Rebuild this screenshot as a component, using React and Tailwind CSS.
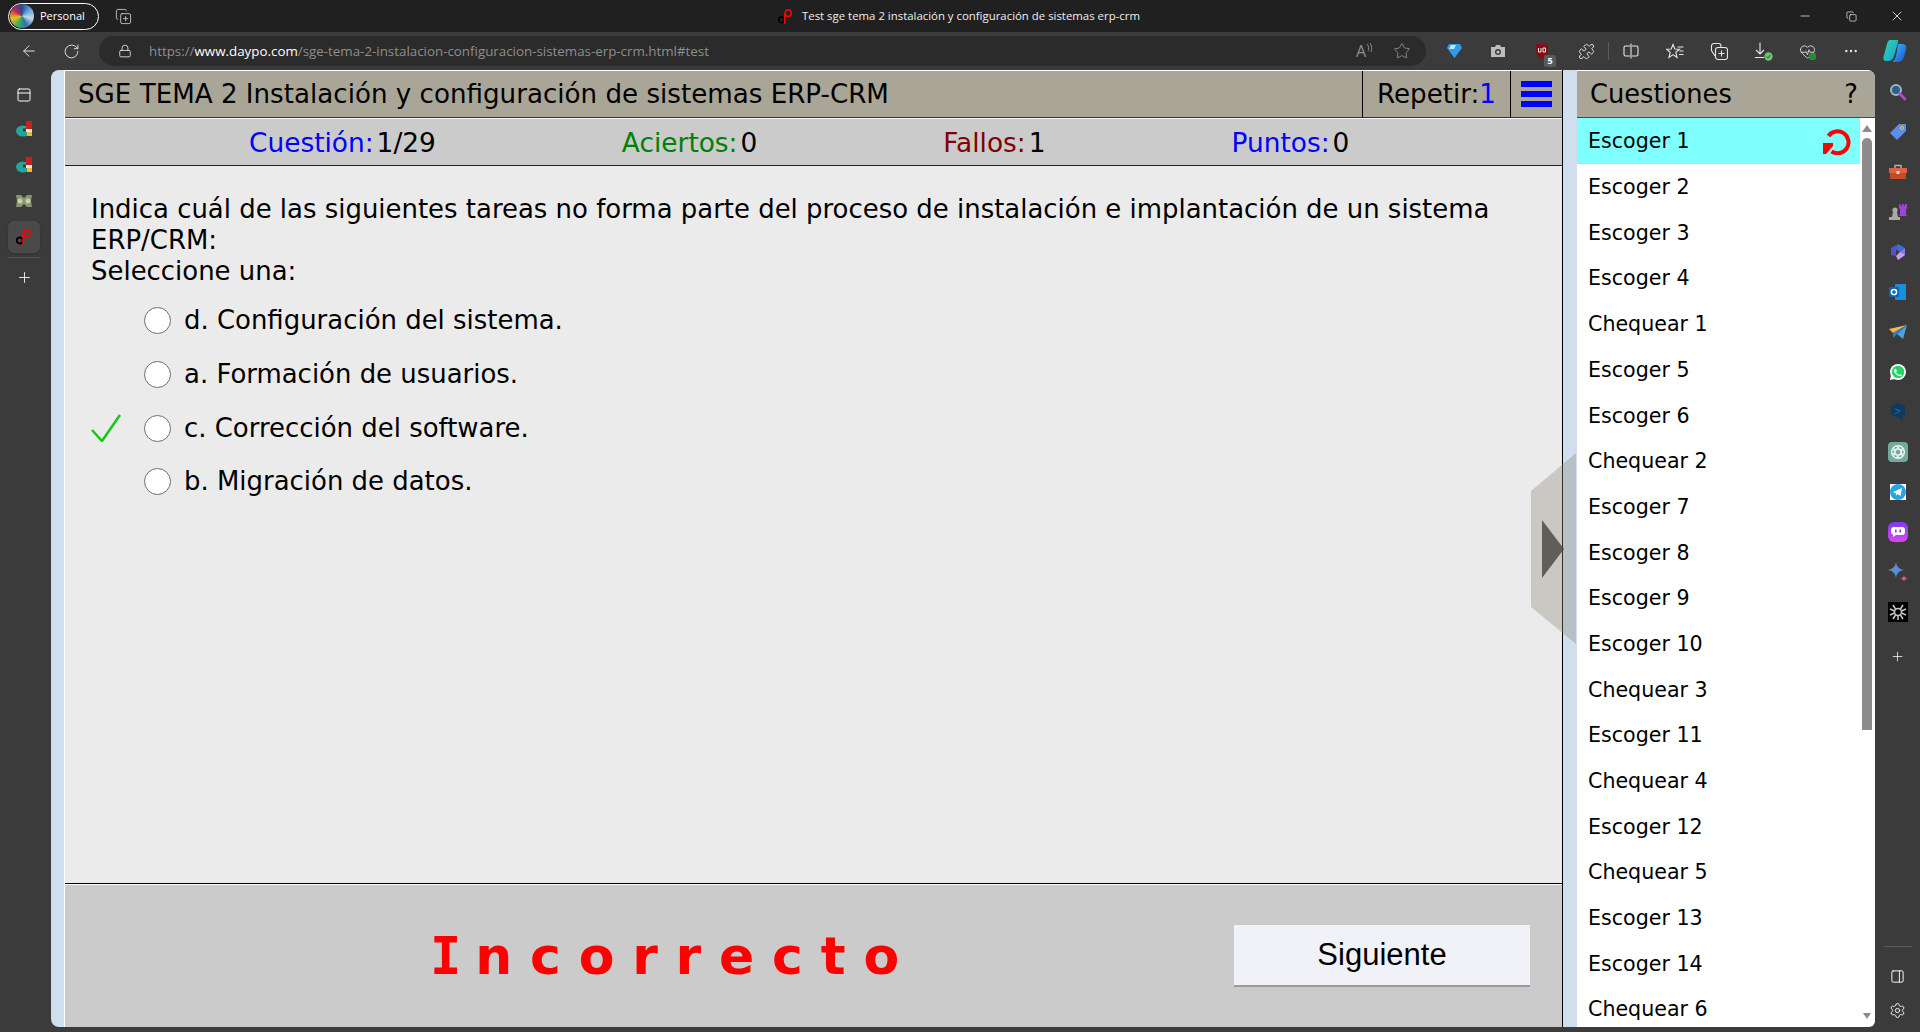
import React from 'react';
import {
  ArrowLeft, RotateCw, Lock, Star, Puzzle, HeartPulse, MoreHorizontal,
  Minus, X, Copy, Plus, Settings, PanelRight, PanelTop, CopyPlus,
} from 'lucide-react';

const QUESTIONS = [
  'Escoger 1', 'Escoger 2', 'Escoger 3', 'Escoger 4', 'Chequear 1', 'Escoger 5', 'Escoger 6', 'Chequear 2',
  'Escoger 7', 'Escoger 8', 'Escoger 9', 'Escoger 10', 'Chequear 3', 'Escoger 11', 'Chequear 4', 'Escoger 12',
  'Chequear 5', 'Escoger 13', 'Escoger 14', 'Chequear 6',
];

const OPTIONS = [
  { label: 'd. Configuración del sistema.' },
  { label: 'a. Formación de usuarios.' },
  { label: 'c. Corrección del software.', correct: true },
  { label: 'b. Migración de datos.' },
];

const STATS = [
  { label: 'Cuestión:', value: '1/29', color: 'text-[#0000ff]' },
  { label: 'Aciertos:', value: '0', color: 'text-[#008000]' },
  { label: 'Fallos:', value: '1', color: 'text-[#800000]' },
  { label: 'Puntos:', value: '0', color: 'text-[#0000ff]' },
];

function Favicon({ size = 16 }) {
  return (
    <svg width={size} height={size} viewBox="0 0 16 16" fill="none">
      <circle cx="3.800" cy="11.500" r="3" stroke="#000" strokeWidth="1.800" />
      <ellipse cx="10.800" cy="4.500" rx="3.200" ry="3.500" stroke="#f00" strokeWidth="1.800" />
      <path d="M7.200 16 V5" stroke="#f00" strokeWidth="1.800" />
    </svg>
  );
}

function PieTab() {
  return (
    <svg width="16" height="16" viewBox="0 0 16 16">
      <ellipse cx="7" cy="10" rx="7" ry="5.500" fill="#26a69a" />
      <rect x="7" y="7.500" width="4" height="3" fill="#3b3b3b" />
      <rect x="10" y="0" width="6" height="8" fill="#c62020" />
      <rect x="10" y="8" width="6" height="3" fill="#e9e9e9" />
      <rect x="11" y="11" width="5" height="4" fill="#f4b82e" />
    </svg>
  );
}

function MaskTab() {
  return (
    <svg width="16" height="14" viewBox="0 0 16 14">
      <path d="M0 1 L5 1 L8 4 L11 1 L16 1 L15 7 L16 13 L11 13 L8 10 L5 13 L0 13 L1 7 Z" fill="#8c9478" />
      <circle cx="4" cy="7" r="2.500" fill="#c6d690" />
      <circle cx="12" cy="7" r="2.500" fill="#c6d690" />
    </svg>
  );
}

function LeftRail() {
  return (
    <div className="w-[51px] shrink-0 flex flex-col items-center pr-[3px]">
      <div className="h-[41px] pt-[17px]"><PanelTop size={16} strokeWidth={1.5} className="text-white" /></div>
      <div className="h-9 flex items-center"><PieTab /></div>
      <div className="h-9 flex items-center"><PieTab /></div>
      <div className="h-9 flex items-center"><MaskTab /></div>
      <div className="w-8 h-8 mt-[2px] rounded-md bg-[#4a4a4a] shadow flex items-center justify-center"><Favicon /></div>
      <div className="w-8 h-px bg-[#555] mt-1" />
      <Plus size={17} strokeWidth={1.2} className="text-white mt-[11px]" />
    </div>
  );
}

function RightIcon({ children }) {
  return <div className="h-10 flex items-center justify-center">{children}</div>;
}

function RightRail() {
  return (
    <div className="w-[45px] shrink-0 flex flex-col pt-[2px]">
      <RightIcon>
        <svg width="18" height="18" viewBox="0 0 18 18" fill="none">
          <circle cx="7" cy="7" r="5" fill="#2c5f86" stroke="#9fb4c4" strokeWidth="2" />
          <path d="M11 11 L16 16" stroke="#c040e0" strokeWidth="2.600" strokeLinecap="round" />
        </svg>
      </RightIcon>
      <RightIcon>
        <svg width="18" height="18" viewBox="0 0 18 18">
          <path d="M10 1 H17 V8 L8 17 L1 10 Z" fill="#5b8def" />
          <circle cx="13" cy="5" r="1.600" fill="none" stroke="#f2c438" />
        </svg>
      </RightIcon>
      <RightIcon>
        <svg width="18" height="16" viewBox="0 0 18 16">
          <path d="M6 4 V1.500 H12 V4" fill="none" stroke="#b0b0b0" strokeWidth="1.400" />
          <rect x="0" y="4" width="18" height="5" fill="#e0613a" />
          <rect x="1" y="9" width="16" height="6" fill="#c44a28" />
          <rect x="7.500" y="7" width="3" height="3" fill="#ddd" />
        </svg>
      </RightIcon>
      <RightIcon>
        <svg width="18" height="18" viewBox="0 0 18 18">
          <circle cx="6" cy="7" r="2.600" fill="#a8a8a8" />
          <path d="M4 9 H8 L9 14 H11 V17 H0 V14 H3 Z" fill="#a8a8a8" />
          <path d="M10 1 H11.500 V2.500 H13 V1 H15 V2.500 H16 V1 H18 V5 L17 6 V11 L18 13 H10 L11 11 V6 L10 5 Z" fill="#a040e0" />
        </svg>
      </RightIcon>
      <RightIcon>
        <svg width="18" height="18" viewBox="0 0 18 18">
          <path d="M9 1 L16 5 L11 9 L7 6 Z" fill="#3a6fd8" />
          <path d="M16 5 V12 L9 17 L11 9 Z" fill="#9c6fe0" />
          <path d="M2 5 L9 1 L7 6 V13 L2 12 Z" fill="#5b4fd0" />
          <path d="M7 13 L11 9 L16 12 L9 17 Z" fill="#c2a0ec" />
        </svg>
      </RightIcon>
      <RightIcon>
        <svg width="18" height="18" viewBox="0 0 18 18">
          <rect x="6" y="1" width="11" height="16" rx="1" fill="#1490df" />
          <rect x="0" y="4" width="10" height="10" rx="1" fill="#0a64b8" />
          <circle cx="5" cy="9" r="2.600" fill="none" stroke="#fff" strokeWidth="1.500" />
        </svg>
      </RightIcon>
      <RightIcon>
        <svg width="18" height="15" viewBox="0 0 18 15">
          <path d="M0 4 L18 0 L4 8 Z" fill="#f4b84a" />
          <path d="M18 0 L14 14 L8 9 Z" fill="#4aa3df" />
          <path d="M18 0 L4 8 L4 13 L8 9 Z" fill="#2d7fc0" />
        </svg>
      </RightIcon>
      <RightIcon>
        <svg width="18" height="18" viewBox="0 0 18 18">
          <circle cx="9" cy="9" r="8" fill="#fff" />
          <path d="M1 17 L2 12 L6 16 Z" fill="#fff" />
          <circle cx="9" cy="9" r="6.200" fill="#25d366" />
          <path d="M6.500 5.500 L8 8 L7 9 C8 11 9 11.500 10.500 12 L11.500 11 L13 12.500 C11 14.500 5 11.500 5 7 Z" fill="#fff" />
        </svg>
      </RightIcon>
      <RightIcon>
        <svg width="16" height="20" viewBox="0 0 16 20">
          <path d="M8 1 L15 4 V13 L13 15 V19 L9 16 L1 13 V4 Z" fill="#0f3a5e" />
          <path d="M5 7 L10 9 L5 12" fill="none" stroke="#1d5a8a" strokeWidth="1.400" />
        </svg>
      </RightIcon>
      <RightIcon>
        <div className="w-5 h-5 rounded-[4px] bg-[#74aa9c] flex items-center justify-center">
          <svg width="16" height="16" viewBox="0 0 16 16" fill="none" stroke="#e8f3f0" strokeWidth="1.100">
            <circle cx="8" cy="8" r="6.500" />
            <ellipse cx="8" cy="8" rx="6.500" ry="2.800" />
            <ellipse cx="8" cy="8" rx="6.500" ry="2.800" transform="rotate(60 8 8)" />
            <ellipse cx="8" cy="8" rx="6.500" ry="2.800" transform="rotate(120 8 8)" />
          </svg>
        </div>
      </RightIcon>
      <RightIcon>
        <div className="w-4 h-4 bg-white flex items-center justify-center">
          <svg width="16" height="16" viewBox="0 0 16 16">
            <circle cx="8" cy="8" r="8" fill="#26a5e4" />
            <path d="M3 8 L12 4 L10.500 12 L7.500 10 L6 11.500 L6 9.500 Z" fill="#fff" />
          </svg>
        </div>
      </RightIcon>
      <RightIcon>
        <div className="w-5 h-5 rounded-[6px] bg-gradient-to-b from-[#7c3aed] to-[#d946ef] flex items-center justify-center">
          <svg width="14" height="12" viewBox="0 0 14 12">
            <path d="M3 1 H11 A3 3 0 0 1 14 4 V6 A3 3 0 0 1 11 9 H5 L2 11 V8.500 A3 3 0 0 1 0 6 V4 A3 3 0 0 1 3 1 Z" fill="#fff" />
            <rect x="4" y="3.500" width="1.600" height="3" fill="#a03ae0" />
            <rect x="8.400" y="3.500" width="1.600" height="3" fill="#a03ae0" />
          </svg>
        </div>
      </RightIcon>
      <RightIcon>
        <svg width="20" height="20" viewBox="0 0 20 20">
          <defs>
            <linearGradient id="gem" x1="0" y1="0" x2="1" y2="1">
              <stop offset="0" stopColor="#e8734a" />
              <stop offset="0.500" stopColor="#4a90e2" />
              <stop offset="1" stopColor="#9b6fe0" />
            </linearGradient>
          </defs>
          <path d="M8 0 C8.500 4 10.500 7 16 8 C10.500 9 8.500 12 8 16 C7.500 12 5.500 9 0 8 C5.500 7 7.500 4 8 0 Z" fill="url(#gem)" />
          <path d="M16 13 C16.200 15 17 16 20 16.500 C17 17 16.200 18 16 20 C15.800 18 15 17 12 16.500 C15 16 15.800 15 16 13 Z" fill="#d9607a" />
        </svg>
      </RightIcon>
      <RightIcon>
        <div className="w-5 h-5 bg-black flex items-center justify-center">
          <svg width="18" height="18" viewBox="0 0 18 18" fill="none" stroke="#c8c8c8" strokeWidth="1.500">
            <circle cx="9" cy="9" r="3.500" />
            <path d="M4 2 L6.500 6 M14 2 L11.500 6 M1 6 L5.500 8 M17 6 L12.500 8 M1 12 L5.500 10 M17 12 L12.500 10 M4 16 L6.500 12 M14 16 L11.500 12 M9 12.500 V17" />
          </svg>
        </div>
      </RightIcon>
      <div className="h-[48px] flex items-center justify-center"><Plus size={15} strokeWidth={1.2} className="text-white" /></div>
      <div className="flex-1" />
      <div className="w-7 h-px bg-[#5c5c5c] mx-auto mb-3" />
      <div className="h-[34px] flex items-center justify-center"><PanelRight size={15} strokeWidth={1.5} className="text-white" /></div>
      <div className="h-[34px] flex items-center justify-center mb-[5px]"><Settings size={17} strokeWidth={1.3} className="text-white" /></div>
    </div>
  );
}

function ToolCell({ children }) {
  return <div className="w-[44px] flex justify-center relative">{children}</div>;
}

function TopChrome() {
  return (
    <>
      <div className="h-8 bg-[#202020] flex items-center text-white shrink-0 relative">
        <div className="ml-2 h-[27px] w-[91px] rounded-full border border-white flex items-center gap-[6px] pl-[1px]">
          <div className="w-6 h-6 rounded-full bg-[conic-gradient(#274b8c,#5fa8d8,#c8d8e8,#2f6fb0,#3fae5a,#e8c020,#c02060,#274b8c)]" />
          <span className="text-[11px] font-['Open_Sans',sans-serif]">Personal</span>
        </div>
        <CopyPlus size={17} strokeWidth={1.1} className="ml-[16px] text-[#ddd]" />
        <div className="absolute left-[778px] top-0 h-8 flex items-center gap-[9px]">
          <Favicon size={15} />
          <span className="text-[11.4px] font-['Open_Sans',sans-serif] text-[#eee]">Test sge tema 2 instalación y configuración de sistemas erp-crm</span>
        </div>
        <div className="ml-auto flex items-center">
          <div className="w-[46px] flex justify-center"><Minus size={14} strokeWidth={1.2} /></div>
          <div className="w-[46px] flex justify-center"><Copy size={11} strokeWidth={1.4} /></div>
          <div className="w-[46px] flex justify-center"><X size={16} strokeWidth={1.2} /></div>
        </div>
      </div>
      <div className="h-[38px] bg-[#3b3b3b] flex items-center shrink-0 text-[#e6e6e6]">
        <div className="w-[57px] flex justify-center"><ArrowLeft size={18} strokeWidth={1.3} /></div>
        <div className="w-[32px] flex justify-center -ml-[2px]"><RotateCw size={17} strokeWidth={1.3} /></div>
        <div className="ml-[12px] w-[1327px] h-[30px] rounded-full bg-[#2b2b2b] flex items-center font-['Open_Sans',sans-serif] text-[13.35px]">
          <Lock size={14} strokeWidth={1.4} className="ml-[19px] mr-[17px] text-[#eee]" />
          <span className="text-[#8e8e8e]">https://</span>
          <span className="text-white">www.daypo.com</span>
          <span className="text-[#8e8e8e]">/sge-tema-2-instalacion-configuracion-sistemas-erp-crm.html#test</span>
          <div className="ml-auto flex items-center gap-[20px] pr-[15px] text-[#8e8e8e]">
            <div className="flex items-start">
              <span className="text-[16px] leading-none">A</span>
              <svg width="7" height="11" viewBox="0 0 7 11" fill="none" stroke="#8e8e8e"><path d="M1 1 C3 3 3 6 2 8 M4 0 C6 3 6 6 5 9" /></svg>
            </div>
            <Star size={18} strokeWidth={1.2} />
          </div>
        </div>
        <div className="flex items-center ml-[6px]">
          <ToolCell>
            <svg width="15" height="16" viewBox="0 0 15 16"><path d="M2 1 H13 L15 5 L7.500 15 L0 5 Z" fill="#2f9ce8" /><path d="M4 2 H9 L7 6 H2 Z" fill="#bfe6ff" /></svg>
          </ToolCell>
          <ToolCell>
            <svg width="16" height="14" viewBox="0 0 16 14"><path d="M1 3 H5 L6 1 H10 L11 3 H15 V13 H1 Z" fill="#bdbdbd" /><circle cx="8" cy="8" r="3" fill="#3b3b3b" /><circle cx="8" cy="8" r="1.600" fill="#bdbdbd" /></svg>
          </ToolCell>
          <ToolCell>
            <svg width="14" height="17" viewBox="0 0 14 17"><path d="M1 1 H13 V9 C13 13 9 15 7 16 C5 15 1 13 1 9 Z" fill="#800f1a" /><path d="M3.500 5 V9 H6 V5 M8 9 V5 H10.500 V9 Z" fill="none" stroke="#eee" /></svg>
            <span className="absolute left-[24px] top-[12px] w-[12px] h-[12px] rounded-[2px] bg-[#5a5a5a] text-[9px] leading-[12px] text-center text-white font-bold font-['Open_Sans',sans-serif]">5</span>
          </ToolCell>
          <ToolCell><Puzzle size={17} strokeWidth={1.3} /></ToolCell>
          <div className="w-px h-[18px] bg-[#5a5a5a]" />
          <ToolCell>
            <svg width="16" height="16" viewBox="0 0 16 16" fill="none" stroke="currentColor" strokeWidth="1.100">
              <path d="M7 3 H2.500 A1.500 1.500 0 0 0 1 4.500 V11.500 A1.500 1.500 0 0 0 2.500 13 H7 M9 3 H13.500 A1.500 1.500 0 0 1 15 4.500 V11.500 A1.500 1.500 0 0 1 13.500 13 H9 M8 0.500 V15.500" />
            </svg>
          </ToolCell>
          <ToolCell>
            <svg width="18" height="16" viewBox="0 0 18 16" fill="none" stroke="currentColor" strokeWidth="1.100">
              <path d="M7 1.500 L8.800 6 L13.500 6.200 L9.800 9.200 L11 14.500 L7 11.600 L3 14.500 L4.200 9.200 L0.500 6.200 L5.200 6 Z M11.500 4 H17.500 M13.500 8 H17.500 M13 11.500 H17.500" />
            </svg>
          </ToolCell>
          <ToolCell>
            <svg width="18" height="18" viewBox="0 0 18 18" fill="none" stroke="currentColor" strokeWidth="1.100">
              <path d="M5 14 L1.500 8.500 V4 A2.500 2.500 0 0 1 4 1.500 H8.500 A2.500 2.500 0 0 1 11 4 V5.500" />
              <rect x="5.500" y="5.500" width="12" height="12" rx="2.500" />
              <path d="M11.500 8.500 V14.500 M8.500 11.500 H14.500" />
            </svg>
          </ToolCell>
          <ToolCell>
            <svg width="19" height="19" viewBox="0 0 19 19" fill="none">
              <path d="M6 0.500 V12 M2 8 L6 12 L10 8 M1 15.500 H10" stroke="currentColor" strokeWidth="1.100" />
              <circle cx="14.500" cy="14.500" r="4.200" fill="#6fbf73" />
              <path d="M12.500 14.500 L14 16 L16.500 13" stroke="#2b5a2e" strokeWidth="1" />
            </svg>
          </ToolCell>
          <ToolCell>
            <HeartPulse size={17} strokeWidth={1.2} />
            <span className="absolute left-[24px] top-[10px] w-[7px] h-[7px] rounded-[2px] bg-[#1f8f3a]" />
          </ToolCell>
          <ToolCell><MoreHorizontal size={16} strokeWidth={1.6} /></ToolCell>
          <ToolCell>
            <svg width="24" height="24" viewBox="0 0 24 24">
              <defs>
                <linearGradient id="cop1" x1="0" y1="0" x2="1" y2="1"><stop offset="0" stopColor="#38bdf8" /><stop offset="1" stopColor="#1d4ed8" /></linearGradient>
                <linearGradient id="cop2" x1="0" y1="0" x2="1" y2="1"><stop offset="0" stopColor="#34d399" /><stop offset="1" stopColor="#0ea5e9" /></linearGradient>
              </defs>
              <path d="M7 1 H14 C16 1 15 3 14.500 5 L11 17 C10 20 8 22 5 22 H3 C0 22 0 19 1 16 L4 5 C5 2 5.500 1 7 1 Z" fill="url(#cop2)" />
              <path d="M15 5 H19 C22 5 24 7 23 10 L21 18 C20 21 18 23 15 23 H9 C12 22 12.500 18 13.500 15 Z" fill="url(#cop1)" />
            </svg>
          </ToolCell>
        </div>
      </div>
    </>
  );
}

function MainPanel() {
  return (
    <div className="flex-1 min-w-0 flex flex-col border-r border-black">
      <div className="h-[48px] bg-[#a9a597] flex items-stretch shrink-0 text-[26.15px] text-black border-t border-white border-b border-b-[#333]">
        <div className="flex-1 pl-[13px] pt-[2px] flex items-center whitespace-nowrap">SGE TEMA 2 Instalación y configuración de sistemas ERP-CRM</div>
        <div className="w-[148px] border-l border-black pt-[1px] flex items-center justify-center">
          Repetir:<span className="text-[#0000ff]">1</span>
        </div>
        <div className="w-[52px] border-l border-black flex flex-col items-center justify-center gap-[4px]">
          <span className="block w-[31px] h-[6px] bg-[#0000ff]" />
          <span className="block w-[31px] h-[6px] bg-[#0000ff]" />
          <span className="block w-[31px] h-[6px] bg-[#0000ff]" />
        </div>
      </div>
      <div className="h-[48px] shrink-0 bg-[#cbcbcb] border-t border-t-[#f4f4f4] border-b border-b-[#222] flex items-center gap-[186px] text-[26.4px] pl-[184px] pt-[2px]">
        {STATS.map((s) => (
          <div key={s.label} className="whitespace-nowrap">
            <span className={s.color}>{s.label}</span><span className="ml-[3px]">{s.value}</span>
          </div>
        ))}
      </div>
      <div className="flex-1 bg-[#ebebeb] pl-[26px] pr-[50px] pt-[28px] text-black text-[25.95px]">
        <p className="leading-[31px]">
          Indica cuál de las siguientes tareas no forma parte del proceso de instalación e implantación de un sistema ERP/CRM:
        </p>
        <p className="leading-[31px]">Seleccione una:</p>
        <div className="mt-[7px]">
          {OPTIONS.map((o) => (
            <div key={o.label} className="h-[53.7px] flex items-center">
              <div className="w-[53px] shrink-0">
                {o.correct && (
                  <svg width="30" height="28" viewBox="0 0 30 28" fill="none">
                    <path d="M1 16 L11 27 L29 1" stroke="#19c819" strokeWidth="2.600" />
                  </svg>
                )}
              </div>
              <span className="w-[27px] h-[27px] shrink-0 rounded-full bg-white border-[1.5px] border-[#6e6e6e]" />
              <span className="ml-[13px]">{o.label}</span>
            </div>
          ))}
        </div>
      </div>
      <div className="h-[144px] shrink-0 bg-[#cbcbcb] border-t border-t-black flex flex-col">
        <div className="h-px bg-white shrink-0" />
        <div className="flex-1 flex items-center">
          <div className="w-[1169px] flex justify-center pl-[48px] text-[#ff0000] font-bold text-[52px] tracking-[17.8px] leading-none">
            <span className="font-['DejaVu_Sans_Mono',monospace] -mr-[4px]">I</span>
            <span>ncorrecto</span>
          </div>
          <button className="w-[296px] h-[62px] bg-[#f0f2f7] border-b-2 border-b-[#9a9a9a] text-black text-[31px] font-['Liberation_Sans',sans-serif]">
            Siguiente
          </button>
        </div>
      </div>
    </div>
  );
}

function QuestionsPanel() {
  return (
    <div className="w-[298px] shrink-0 flex flex-col bg-white rounded-tr-lg rounded-br-md overflow-hidden">
      <div className="h-[48px] bg-[#a9a597] shrink-0 flex items-center justify-between pl-[13px] pr-[17px] text-[25.7px] text-black border-b border-[#4a4a4a] border-t border-t-white">
        <span>Cuestiones</span>
        <span>?</span>
      </div>
      <div className="flex-1 min-h-0 flex">
        <div className="flex-1 min-w-0 overflow-hidden">
          {QUESTIONS.map((q, i) => (
            <div key={q} className={`h-[45.7px] flex items-center justify-between pl-[11px] pr-[9px] text-[20.6px] text-black ${i === 0 ? 'bg-[#80ffff]' : ''}`}>
              <span className="pt-[2px]">{q}</span>
              {i === 0 && (
                <svg width="28" height="28" viewBox="0 0 28 28" fill="none">
                  <path d="M5.500 9 A11 11 0 1 1 8.500 24.500" stroke="#f00" strokeWidth="4" />
                  <path d="M0 16 H10 V19 L3 27 H0 Z" fill="#f00" />
                </svg>
              )}
            </div>
          ))}
        </div>
        <div className="w-[15px] shrink-0 flex flex-col items-center pr-[2px]">
          <div className="mt-[7px] w-0 h-0 border-x-[5px] border-x-transparent border-b-[7px] border-b-[#8c8c8c]" />
          <div className="mt-[6px] w-[10px] h-[592px] rounded-t-full bg-[#8c8c8c]" />
          <div className="mt-auto mb-[8px] w-0 h-0 border-x-[4px] border-x-transparent border-t-[6px] border-t-[#8c8c8c]" />
        </div>
      </div>
    </div>
  );
}

export default function App() {
  return (
    <div className="w-[1920px] h-[1032px] bg-[#3b3b3b] flex flex-col overflow-hidden font-['DejaVu_Sans',sans-serif]">
      <TopChrome />
      <div className="flex-1 min-h-0 flex">
        <LeftRail />
        <div className="flex-1 min-w-0 flex relative mb-[5px] rounded-l-lg overflow-hidden">
          <div className="w-[14px] bg-[#cfdfee] shrink-0 border-r border-white" />
          <MainPanel />
          <div className="w-[14px] bg-[#cfdfee] shrink-0" />
          <QuestionsPanel />
          {/* flecha sobre el panel */}
          <svg className="absolute left-[1480px] top-[383px]" width="46" height="191" viewBox="0 0 46 191">
            <path d="M0 38 L45 0 V191 L0 154 Z" fill="#8a8678" fillOpacity="0.35" />
            <path d="M11 67 L33 96 L11 125 Z" fill="#45443f" fillOpacity="0.8" />
          </svg>
        </div>
        <RightRail />
      </div>
    </div>
  );
}
